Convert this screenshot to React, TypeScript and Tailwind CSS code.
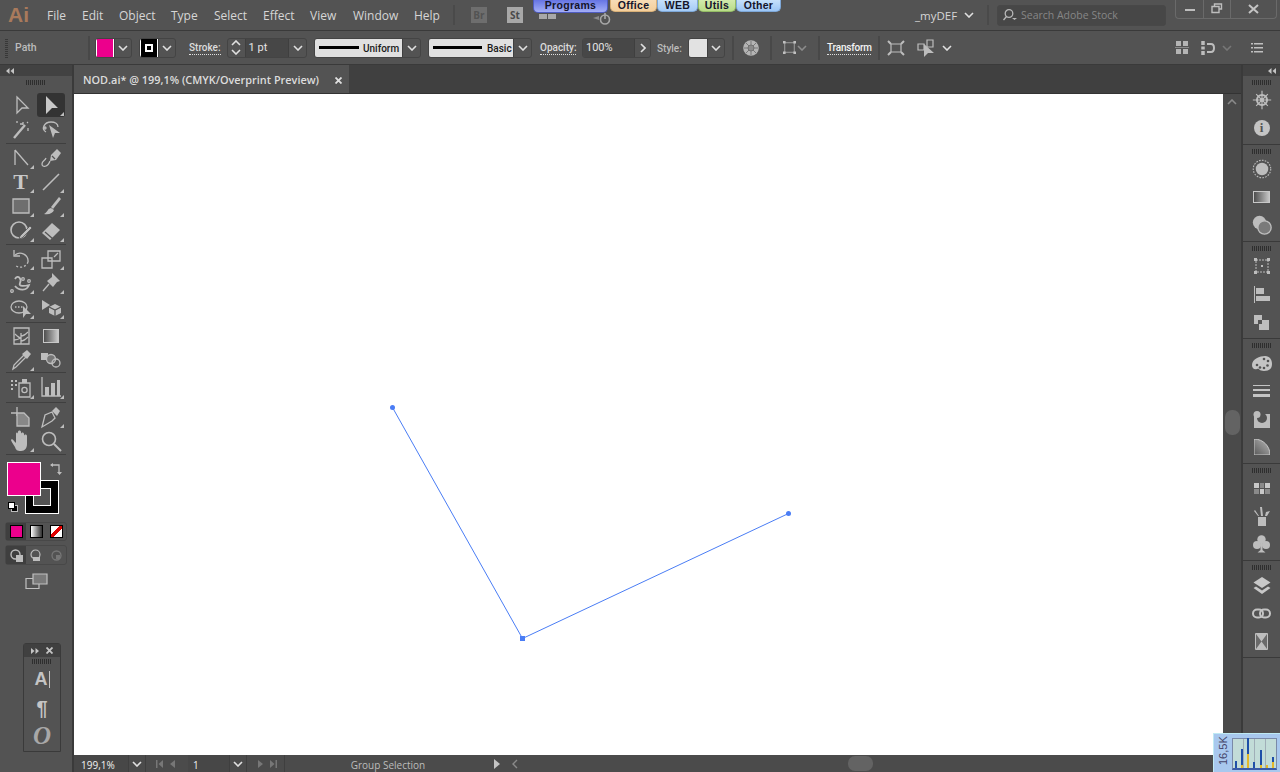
import type { ReactNode } from 'react'

const font = "font-['Open_Sans',sans-serif]"
const g = '#bdbdbd'

function Ic({ children, size = 24 }: { children: ReactNode; size?: number }) {
  return (
    <svg width={size} height={size} viewBox="0 0 24 24" fill="none" stroke={g} strokeWidth="1.3">
      {children}
    </svg>
  )
}

function Chev({ color = '#e0e0e0' }: { color?: string }) {
  return (
    <svg width="10" height="6" viewBox="0 0 10 6" fill="none" stroke={color} strokeWidth="1.6">
      <path d="M1 1l4 4 4-4" />
    </svg>
  )
}

function Grip({ className = '' }: { className?: string }) {
  return (
    <div
      className={`h-[5px] w-[20px] bg-[repeating-linear-gradient(90deg,#2e2e2e_0,#2e2e2e_1px,transparent_1px,transparent_2px)] ${className}`}
    />
  )
}

function Drop({ w = 'w-[18px]' }: { w?: string }) {
  return (
    <div className={`flex h-full ${w} items-center justify-center border-l border-[#3f3f3f]`}>
      <Chev />
    </div>
  )
}

function Box({ className = '', children }: { className?: string; children: ReactNode }) {
  return (
    <div className={`flex h-[20px] items-center overflow-hidden rounded-[3px] border border-[#444444] ${className}`}>
      {children}
    </div>
  )
}

function Sep() {
  return <div className="h-[24px] w-[2px] bg-[#484848]" />
}

function Dotted({ className = '', children }: { className?: string; children: ReactNode }) {
  return (
    <span className={`mt-[1px] border-b border-dotted border-[#e0e0e0] text-[10px] leading-[13px] font-medium whitespace-nowrap ${className}`}>
      {children}
    </span>
  )
}

const menus: [string, string][] = [
  ['File', 'w-[35px]'],
  ['Edit', 'w-[37px]'],
  ['Object', 'w-[52px]'],
  ['Type', 'w-[43px]'],
  ['Select', 'w-[49px]'],
  ['Effect', 'w-[47px]'],
  ['View', 'w-[43px]'],
  ['Window', 'w-[61px]'],
  ['Help', 'w-[36px]'],
]

const launcher = [
  { t: 'Programs', c: 'mr-[2px] w-[75px] h-[13px] bg-gradient-to-b from-[#6674e4] to-[#a4aef6] border-[#4f5cc0]' },
  { t: 'Office', c: 'w-[47px] h-[12px] bg-gradient-to-b from-[#f7dcb6] to-[#f4cf9c] border-[#d8b078]' },
  { t: 'WEB', c: 'w-[41px] h-[12px] bg-gradient-to-b from-[#c6e0fa] to-[#a4cbf6] border-[#7ea8d8]' },
  { t: 'Utils', c: 'w-[38px] h-[12px] bg-gradient-to-b from-[#d2eaac] to-[#b8dc88] border-[#94bc66]' },
  { t: 'Other', c: 'w-[45px] h-[12px] bg-gradient-to-b from-[#c6e0fa] to-[#9cc6f6] border-[#7ea8d8]' },
]

function TitleBar() {
  return (
    <div className="relative flex h-[31px] shrink-0 items-center border-b border-[#3a3a3a] bg-[#535353] pl-[8px]">
      <span className="w-[39px] font-['Liberation_Sans',sans-serif] text-[21px] font-bold text-[#a97a5c]">Ai</span>
      {menus.map(([m, w]) => (
        <span key={m} className={`${w} pt-[1px] text-[12px] text-[#d6d6d6]`}>
          {m}
        </span>
      ))}
      <div className="ml-[3px] h-[20px] w-[2px] bg-[#4a4a4a]" />
      <div className="ml-[16px] flex h-[16px] w-[16px] items-center justify-center bg-[#6e6e6e] text-[10px] font-bold text-[#535353]">
        Br
      </div>
      <div className="ml-[20px] flex h-[16px] w-[16px] items-center justify-center bg-[#a8a8a8] text-[10px] font-bold text-[#4a4a4a]">
        St
      </div>
      <div className="mt-[3px] ml-[16px] flex gap-[1px]">
        <div className="h-[5px] w-[8px] bg-[#a8a8a8]" />
        <div className="h-[5px] w-[8px] bg-[#a8a8a8]" />
      </div>
      <div className="mt-[8px] ml-[36px]">
        <svg width="20" height="14" viewBox="0 0 20 14" fill="none" stroke="#a8a8a8" strokeWidth="1.6">
          <circle cx="13" cy="7.5" r="4.5" />
          <path d="M13 1v6" />
          <path d="M1 6l6-2v4z" fill="#8a8a8a" stroke="none" />
        </svg>
      </div>
      <span className="ml-[303px] w-[47px] pt-[1px] text-[11.5px] text-[#d6d6d6]">_myDEF</span>
      <div className="ml-[2px]">
        <Chev />
      </div>
      <div className="ml-[13px] h-[20px] w-[2px] bg-[#4a4a4a]" />
      <div className="ml-[8px] flex h-[21px] w-[169px] items-center rounded-[3px] border border-[#484848] bg-[#474747] pl-[4px]">
        <svg width="16" height="14" viewBox="0 0 16 14" fill="none" stroke="#b8b8b8" strokeWidth="1.3">
          <circle cx="7" cy="5.5" r="3.8" />
          <path d="M4.5 8.5L1.5 12" />
          <path d="M10 10h5l-2.5 2z" fill="#b8b8b8" stroke="none" />
        </svg>
        <span className="ml-[3px] pt-[1px] text-[10.5px] text-[#868686]">Search Adobe Stock</span>
      </div>
      <div className="mb-[12px] ml-[9px] flex h-[19px] w-[102px] rounded-b-[4px] border border-t-0 border-[#6a6a6a]">
        <div className="flex w-[28px] items-center justify-center border-r border-[#6a6a6a]">
          <div className="mt-[3px] h-[2px] w-[10px] bg-[#bdbdbd]" />
        </div>
        <div className="flex w-[27px] items-center justify-center border-r border-[#6a6a6a]">
          <svg width="12" height="11" viewBox="0 0 12 11" fill="none" stroke="#bdbdbd" strokeWidth="1.4">
            <path d="M3.5 3V1h7v5H8M1 3.5h7v6H1z" />
          </svg>
        </div>
        <div className="flex flex-1 items-center justify-center">
          <svg width="11" height="10" viewBox="0 0 11 10" fill="none" stroke="#c4c4c4" strokeWidth="2">
            <path d="M1 1l9 8M10 1l-9 8" />
          </svg>
        </div>
      </div>
      <div className="absolute top-0 left-[533px] flex font-['Liberation_Sans',sans-serif]">
        {launcher.map((b) => (
          <div
            key={b.t}
            className={`flex items-center justify-center rounded-b-[5px] border border-t-0 text-[10.5px] font-bold tracking-[0.3px] text-[#14142a] ${b.c}`}
          >
            {b.t}
          </div>
        ))}
      </div>
    </div>
  )
}

function ControlBar() {
  return (
    <div className="flex h-[34px] shrink-0 items-center border-b border-[#3a3a3a] bg-[#535353] pl-[5px] font-['Roboto',sans-serif] text-[11px]">
      <div className="h-[20px] w-[3px] bg-[repeating-linear-gradient(0deg,#383838_0,#383838_1px,transparent_1px,transparent_2px)]" />
      <span className="ml-[7px] w-[73px] text-[10.5px] font-medium text-[#bcbcbc]">Path</span>
      <Sep />
      <Box className="ml-[5px] w-[37px]">
        <div className="h-[20px] w-[19px] border border-white bg-[#ec008c]" />
        <Drop />
      </Box>
      <Box className="ml-[7px] w-[37px]">
        <div className="flex h-[20px] w-[19px] items-center justify-center border border-white bg-black">
          <div className="h-[8px] w-[8px] border-2 border-white" />
        </div>
        <Drop />
      </Box>
      <Dotted className="ml-[13px] w-[32px] text-[#dcdcdc]">Stroke:</Dotted>
      <Box className="ml-[6px] w-[80px]">
        <div className="flex h-full w-[18px] flex-col items-center justify-center gap-[3px] border-r border-[#3f3f3f]">
          <div className="rotate-180">
            <Chev />
          </div>
          <Chev />
        </div>
        <span className="h-full w-[44px] bg-[#474747] pl-[3px] leading-[18px] text-[#e4e4e4]">1 pt</span>
        <Drop />
      </Box>
      <Box className="ml-[7px] w-[107px]">
        <div className="flex h-full w-[89px] items-center bg-[#e0e0e0] pl-[4px] text-[10px] font-medium text-[#1a1a1a]">
          <div className="h-[3px] w-[40px] bg-black" />
          <span className="mt-[2px] ml-[4px]">Uniform</span>
        </div>
        <Drop />
      </Box>
      <Box className="ml-[7px] w-[104px]">
        <div className="flex h-full w-[86px] items-center bg-[#e0e0e0] pl-[4px] text-[10px] font-medium text-[#1a1a1a]">
          <div className="h-[3px] w-[49px] bg-black" />
          <span className="mt-[2px] ml-[5px]">Basic</span>
        </div>
        <Drop />
      </Box>
      <Dotted className="ml-[8px] w-[36px] text-[#dcdcdc]">Opacity:</Dotted>
      <Box className="ml-[6px] w-[69px]">
        <span className="h-full w-[51px] bg-[#474747] pl-[3px] leading-[18px] text-[#e4e4e4]">100%</span>
        <div className="flex h-full flex-1 items-center justify-center border-l border-[#3f3f3f]">
          <div className="-rotate-90">
            <Chev />
          </div>
        </div>
      </Box>
      <span className="mt-[1px] ml-[6px] w-[25px] text-[10px] font-medium text-[#bcbcbc]">Style:</span>
      <Box className="ml-[6px] w-[37px]">
        <div className="h-[20px] w-[19px] bg-[#e2e2e2]" />
        <Drop />
      </Box>
      <div className="ml-[7px]">
        <Sep />
      </div>
      <div className="ml-[9px]">
        <svg width="16" height="16" viewBox="0 0 16 16" fill="#b4b4b4" stroke="#6a6a6a" strokeWidth="0.8">
          <circle cx="8" cy="8" r="7.8" stroke="none" />
          <path d="M8 1v14M1 8h14M3 3l10 10M13 3L3 13" />
          <circle cx="8" cy="8" r="3" fill="#8a8a8a" />
        </svg>
      </div>
      <div className="ml-[11px]">
        <Sep />
      </div>
      <div className="ml-[11px] flex w-[24px] items-center">
        <svg width="15" height="15" viewBox="0 0 15 15" fill="#c0c0c0" stroke="none">
          <path d="M2 2h11v11H2z" fill="none" stroke="#a8a8a8" />
          <path d="M0 0h3v3H0zM12 0h3v3h-3zM0 12h3v3H0zM12 12h3v3h-3z" />
        </svg>
        <div className="ml-[1px]">
          <Chev color="#8c8c8c" />
        </div>
      </div>
      <div className="ml-[11px]">
        <Sep />
      </div>
      <Dotted className="ml-[7px] w-[44px] tracking-[-0.2px] text-[#f4f4f4]">Transform</Dotted>
      <div className="ml-[7px]">
        <Sep />
      </div>
      <div className="ml-[7px] w-[20px]">
        <svg width="18" height="16" viewBox="0 0 18 16" fill="none" stroke="#bdbdbd" strokeWidth="1.2">
          <path d="M4 4h10v8H4z" />
          <path d="M1 1l3 3M17 1l-3 3M1 15l3-3M17 15l-3-3" strokeWidth="2" />
        </svg>
      </div>
      <div className="ml-[10px] w-[20px]">
        <svg width="18" height="18" viewBox="0 0 18 18" fill="none" stroke="#bdbdbd" strokeWidth="1.2">
          <path d="M10 1h6v7h-6zM1 5h6v6H1z" />
          <path d="M7 5v13l4-4h6z" fill="#bdbdbd" stroke="none" />
        </svg>
      </div>
      <div className="ml-[5px]">
        <Chev />
      </div>
      <div className="flex-1" />
      <svg width="14" height="13" viewBox="0 0 14 13" fill="#b4b4b4">
        <path d="M1 0h5v5H1zM8 0h5v5H8zM1 8h5v5H1zM8 8h5v5H8z" />
        <path d="M0 6h14v1H0z" fill="#8a8a8a" />
      </svg>
      <div className="ml-[12px]">
        <svg width="16" height="14" viewBox="0 0 16 14" fill="none" stroke="#bdbdbd" strokeWidth="2">
          <path d="M2 0v4M2 5.500v3M2 10v4" strokeWidth="3.5" />
          <path d="M6 3h4c4 0 4 8 0 8H6" />
        </svg>
      </div>
      <div className="ml-[5px]">
        <Chev color="#777777" />
      </div>
      <div className="ml-[19px]">
        <svg width="12" height="11" viewBox="0 0 12 11" fill="#c0c0c0">
          <path d="M0 1h2v1.500H0zM3 1h9v1.500H3zM0 5h2v1.500H0zM3 5h9v1.500H3zM0 9h2v1.500H0zM3 9h9v1.500H3z" />
        </svg>
      </div>
      <div className="w-[17px]" />
    </div>
  )
}

function Tool({ icon, more = true, active = false }: { icon: ReactNode; more?: boolean; active?: boolean }) {
  return (
    <div className={`relative flex h-[24.3px] w-[28px] items-center justify-center rounded-[3px] ${active ? 'bg-[#333333]' : ''}`}>
      {icon}
      {more && (
        <div className="absolute right-[1px] bottom-[1px] h-0 w-0 border-b-[4px] border-l-[4px] border-b-[#bdbdbd] border-l-transparent" />
      )}
    </div>
  )
}

function ToolRow({ a, b }: { a: ReactNode; b: ReactNode }) {
  return (
    <div className="flex justify-center gap-[2px] pr-[1px]">
      {a}
      {b}
    </div>
  )
}

function ToolSep() {
  return <div className="mx-[6px] h-px bg-[#3f3f3f]" />
}

function ToolsPanel() {
  return (
    <div className="flex w-[74px] shrink-0 flex-col border-r-2 border-[#3a3a3a] bg-[#535353]">
      <div className="flex h-[11px] items-center bg-[#424242] pl-[6px]">
        <svg width="8" height="6" viewBox="0 0 8 6" fill="#c4c4c4">
          <path d="M3.5 0v6L0 3zM8 0v6L4.5 3z" />
        </svg>
      </div>
      <div className="flex h-[17px] justify-center pt-[4px]">
        <Grip />
      </div>
      <ToolRow
        a={<Tool more={false} icon={<Ic><path d="M8 4l11 11h-6l-5 5z" /></Ic>} />}
        b={<Tool active icon={<Ic><path d="M7 3l12 12h-6l-6 6z" fill="#c8c8c8" stroke="none" /></Ic>} />}
      />
      <ToolRow
        a={<Tool more={false} icon={<Ic><path d="M5 21L16 8" strokeWidth="2.4" /><path d="M14 5v3M11 7h3M19 11v3M8 4v2M19 5l-1 1" /></Ic>} />}
        b={<Tool more={false} icon={<Ic><path d="M7 15C2 12 5 5 12 5c4 0 7 2 7 5" /><path d="M10 8l11 8h-5l-2 5z" fill={g} stroke="none" /><circle cx="6" cy="11" r="1" /></Ic>} />}
      />
      <div className="h-[1px]" />
      <ToolSep />
      <div className="h-[2px]" />
      <ToolRow
        a={<Tool icon={<Ic><path d="M6 4v15M6 4l13 15" /></Ic>} />}
        b={<Tool more={false} icon={<Ic><path d="M12 9l6-6 4 4-5 7-6 1z" fill={g} stroke="none" /><path d="M13 10l3 3" stroke="#535353" /><path d="M11 15c-2 6-8 7-8 3 0-3 3-3 4-6" /></Ic>} />}
      />
      <ToolRow
        a={<Tool icon={<span className="font-['Liberation_Serif',serif] text-[22px] leading-none font-bold text-[#c8c8c8]">T</span>} />}
        b={<Tool icon={<Ic><path d="M4 20L20 4" strokeWidth="1.6" /></Ic>} />}
      />
      <ToolRow
        a={<Tool icon={<Ic><path d="M4 5h16v14H4z" fill="#6e6e6e" /></Ic>} />}
        b={<Tool icon={<Ic><path d="M12 13l8-10 2 2-8 10z" fill={g} stroke="none" /><path d="M12 14c-4 1-3 4-7 6 5 1 9-1 10-4z" fill={g} stroke="none" /></Ic>} />}
      />
      <ToolRow
        a={<Tool icon={<Ic><circle cx="10" cy="11" r="8" strokeWidth="1.6" /><path d="M11 17L21 7l2 2-10 10-3 1z" fill={g} stroke="#535353" strokeWidth="0.8" /></Ic>} />}
        b={<Tool icon={<Ic><path d="M3 14L13 4l8 7-10 10z" fill={g} stroke="none" /><path d="M6 13l8 7" stroke="#535353" /></Ic>} />}
      />
      <div className="h-[1px]" />
      <ToolSep />
      <div className="h-[2px]" />
      <ToolRow
        a={<Tool icon={<Ic><path d="M6 8a8 8 0 0 1 13 7" /><path d="M5 3v6h6" /><path d="M19 15a8 8 0 0 1-13 3" strokeDasharray="2 2" /></Ic>} />}
        b={<Tool icon={<Ic><path d="M9 4h12v10H9z" /><path d="M3 11h10v10H3z" /><path d="M15 10l4-4" /></Ic>} />}
      />
      <ToolRow
        a={<Tool icon={<Ic><path d="M6 8c3-5 7 0 5 4s5 3 9 2c-2 6-10 6-14 1" strokeWidth="1.8" /><circle cx="3" cy="20" r="1.3" /><circle cx="14" cy="8" r="1.3" /><circle cx="20" cy="10" r="1.3" /></Ic>} />}
        b={<Tool icon={<Ic><path d="M13 2l8 8-3 1-4 5-6-6 5-4z" fill={g} stroke="none" /><path d="M10 13l-6 7" /></Ic>} />}
      />
      <ToolRow
        a={<Tool icon={<Ic><ellipse cx="10" cy="11" rx="8" ry="6" /><path d="M6 11h9" strokeDasharray="1.5 1.5" /><path d="M14 10l8 8h-5l-3 4z" fill={g} stroke="none" /></Ic>} />}
        b={<Tool icon={<Ic><path d="M3 4l8 5-8 5z" fill={g} stroke="none" /><path d="M16 8l6 3v6l-6 3-6-3v-6z" fill={g} stroke="none" /><path d="M16 14v6M10 11l6 3 6-3" stroke="#535353" /></Ic>} />}
      />
      <div className="h-[2px]" />
      <ToolSep />
      <div className="h-[1px]" />
      <ToolRow
        a={<Tool more={false} icon={<Ic><path d="M5 4h15v16H5z" /><path d="M12 20V9M12 14c-2 0-4-2-6-4M12 12c3 0 5-2 7-4M12 17c3 0 5-2 7-4M5 16c3 0 5-1 7-2" /></Ic>} />}
        b={<Tool more={false} icon={<svg width="16" height="14"><rect x="0.5" y="0.5" width="15" height="13" fill="url(#tg)" stroke="#c8c8c8" /><defs><linearGradient id="tg"><stop offset="0" stopColor="#4a4a4a" /><stop offset="1" stopColor="#cfcfcf" /></linearGradient></defs></svg>} />}
      />
      <ToolRow
        a={<Tool icon={<Ic><path d="M4 21l1-4L15 7l2 2L7 19z" /><path d="M13 6l5-4 4 4-4 5z" fill={g} stroke="none" /></Ic>} />}
        b={<Tool more={false} icon={<Ic><path d="M2 5h7v7H2z" fill={g} stroke="none" /><circle cx="12" cy="11" r="4.5" fill="#777" /><circle cx="17" cy="15" r="4" /></Ic>} />}
      />
      <ToolSep />
      <div className="h-[2px]" />
      <ToolRow
        a={<Tool icon={<Ic><path d="M10 8h11v14H10z" /><circle cx="15.5" cy="15" r="2.6" /><path d="M13 4h5v4h-5z" fill={g} stroke="none" /><path d="M2 6h2M6 6h2M2 10h2M6 10h2M2 14h2" strokeWidth="2" /></Ic>} />}
        b={<Tool icon={<Ic><path d="M3 2v19h19" /><path d="M6 12h4v9H6zM12 8h4v13h-4zM18 5h3v16h-3z" fill={g} stroke="none" /></Ic>} />}
      />
      <div className="h-[2px]" />
      <ToolSep />
      <div className="h-[2px]" />
      <ToolRow
        a={<Tool more={false} icon={<Ic><path d="M8 2v9M2 8h6" /><path d="M8 8h7l5 5v8H8z" fill="#888" /></Ic>} />}
        b={<Tool icon={<Ic><path d="M3 22l3-12 7-3 3 6-3 3-10 6z" /><path d="M13 6l4-4 4 4-3 5z" fill={g} stroke="none" /></Ic>} />}
      />
      <ToolRow
        a={<Tool icon={<Ic><path d="M6 18c-2-3-4-6-4-7s2-1 3 1l2 2V5c0-2 2-2 2 0V3c0-2 3-2 3 0v2c0-2 3-2 3 0v2c0-2 3-2 3 0v8c0 4-2 7-6 7s-5-1-6-4z" fill={g} stroke="none" /></Ic>} />}
        b={<Tool more={false} icon={<Ic><circle cx="10" cy="10" r="6.5" strokeWidth="1.6" /><path d="M15 15l7 7" strokeWidth="2" /></Ic>} />}
      />
      <div className="h-[1px]" />
      <ToolSep />
      <div className="relative mt-[7px] h-[60px] shrink-0">
        <div className="absolute top-[18px] left-[25px] flex h-[34px] w-[34px] items-center justify-center border border-white bg-black">
          <div className="h-[18px] w-[18px] border border-white bg-[#535353]" />
        </div>
        <div className="absolute top-0 left-[7px] h-[34px] w-[34px] border border-white bg-[#ec008c]" />
        <svg className="absolute top-[0px] left-[49px]" width="14" height="14" viewBox="0 0 14 14" fill="none" stroke="#bdbdbd" strokeWidth="1.3">
          <path d="M2 3h8v7" />
          <path d="M1 3l3-2v4zM8 10h5l-2.5 3z" fill="#bdbdbd" stroke="none" />
        </svg>
        <div className="absolute top-[43px] left-[11px] h-[7px] w-[7px] border border-[#bdbdbd] bg-black" />
        <div className="absolute top-[40px] left-[8px] h-[7px] w-[7px] border border-black bg-white" />
      </div>
      <div className="mx-[5px] flex h-[19px] rounded-[3px] border border-[#484848]">
        <div className="flex w-[20px] items-center justify-center bg-[#3f3f3f]">
          <div className="h-[13px] w-[13px] border border-black bg-[#ec008c]" />
        </div>
        <div className="flex w-[20px] items-center justify-center">
          <div className="h-[13px] w-[13px] border border-black bg-gradient-to-r from-white to-[#333333]" />
        </div>
        <div className="flex w-[20px] items-center justify-center">
          <div className="h-[13px] w-[13px] border border-black bg-[linear-gradient(135deg,white_38%,#e00000_38%,#e00000_62%,white_62%)]" />
        </div>
      </div>
      <div className="mx-[5px] mt-[4px] flex h-[20px] rounded-[3px] border border-[#484848]">
        <div className="flex w-[20px] items-center justify-center bg-[#3f3f3f]">
          <svg width="13" height="13" viewBox="0 0 13 13" fill="none" stroke="#bdbdbd" strokeWidth="1.4">
            <circle cx="5.5" cy="5.5" r="4.5" />
            <path d="M6 6h7v7H6z" fill="#bdbdbd" stroke="none" />
          </svg>
        </div>
        <div className="flex w-[20px] items-center justify-center">
          <svg width="13" height="13" viewBox="0 0 13 13" fill="#bdbdbd" stroke="#bdbdbd" strokeWidth="1.2">
            <circle cx="5.5" cy="5.5" r="4.5" fill="none" />
            <path d="M3 8h7v4H3z" stroke="none" />
          </svg>
        </div>
        <div className="flex w-[20px] items-center justify-center">
          <svg width="11" height="11" viewBox="0 0 11 11" fill="none" stroke="#777777" strokeWidth="1.3">
            <circle cx="5.5" cy="5.5" r="4.5" />
            <path d="M5 5h4v4H5z" fill="#777777" stroke="none" />
          </svg>
        </div>
      </div>
      <div className="mt-[8px] flex justify-center pl-[1px]">
        <svg width="24" height="16" viewBox="0 0 24 16" fill="#7a7a7a" stroke="#c0c0c0" strokeWidth="1.2">
          <path d="M1 5.5h13v10H1z" fill="none" />
          <path d="M8 1h14v10H8z" />
        </svg>
      </div>
    </div>
  )
}

const panelGroups: ReactNode[][] = [
  [
    <Ic size={20} key="nav">
      <circle cx="12" cy="12" r="6" strokeWidth="2.5" />
      <circle cx="12" cy="12" r="1.8" fill={g} />
      <path d="M12 1v22M1 12h22M5 5l14 14M19 5L5 19" strokeWidth="1.4" />
    </Ic>,
    <div key="info" className="flex h-[16px] w-[16px] items-center justify-center rounded-full bg-[#c4c4c4] font-['Liberation_Serif',serif] text-[13px] font-bold text-[#535353]">
      i
    </div>,
  ],
  [
    <Ic size={20} key="stroke">
      <circle cx="12" cy="12" r="7.5" fill={g} stroke="none" />
      <circle cx="12" cy="12" r="10.5" strokeDasharray="2 1.5" />
    </Ic>,
    <svg key="grad" width="17" height="12">
      <rect x="0.5" y="0.5" width="16" height="11" fill="url(#rg)" stroke="#c8c8c8" />
      <defs>
        <linearGradient id="rg">
          <stop offset="0" stopColor="#4a4a4a" />
          <stop offset="1" stopColor="#c8c8c8" />
        </linearGradient>
      </defs>
    </svg>,
    <Ic size={20} key="trans">
      <circle cx="9" cy="9" r="8" fill={g} stroke="none" />
      <circle cx="15" cy="15" r="8" fill="#7a7a7a" strokeWidth="1.6" />
    </Ic>,
  ],
  [
    <svg key="tr" width="16" height="16" viewBox="0 0 16 16" fill={g} stroke="none">
      <path d="M2 2h12v12H2z" fill="none" stroke={g} strokeDasharray="2 1" />
      <path d="M0 0h3v3H0zM13 0h3v3h-3zM0 13h3v3H0zM13 13h3v3h-3zM7 7h2v2H7z" />
    </svg>,
    <svg key="al" width="16" height="17" viewBox="0 0 16 17" fill={g}>
      <path d="M0 0h1v17H0zM2 2h8v6H2zM2 10h14v5H2z" />
    </svg>,
    <svg key="pf" width="15" height="15" viewBox="0 0 15 15" fill={g}>
      <path d="M0 0h8v9H0z" />
      <path d="M5 5h10v10H5z" />
      <path d="M4 5h4v4H4z" fill="#535353" />
    </svg>,
  ],
  [
    <svg key="col" width="20" height="15" viewBox="0 0 20 15">
      <path d="M0 9C0 3 8 0 13 0s7 4 7 8-2 7-8 7S8 12 5 13 0 12 0 9z" fill="#c4c4c4" />
      <circle cx="5" cy="9" r="1.3" fill="#535353" />
      <circle cx="8" cy="11.5" r="1.3" fill="#535353" />
      <circle cx="12" cy="12" r="1.3" fill="#535353" />
      <circle cx="15.5" cy="9.5" r="1.3" fill="#535353" />
      <circle cx="16" cy="5" r="1.3" fill="#535353" />
      <circle cx="12" cy="3" r="1.3" fill="#535353" />
    </svg>,
    <div key="lines" className="flex w-[17px] flex-col gap-[3px]">
      <div className="h-[1px] bg-[#c4c4c4]" />
      <div className="h-[2px] bg-[#c4c4c4]" />
      <div className="h-[3px] bg-[#c4c4c4]" />
    </div>,
    <svg key="path" width="17" height="17" viewBox="0 0 17 17">
      <path d="M1 3h16v14H1z" fill={g} />
      <circle cx="9" cy="7" r="5" fill="#535353" />
      <circle cx="4" cy="3.5" r="3.5" fill={g} />
    </svg>,
    <svg key="fan" width="16" height="16" viewBox="0 0 16 16">
      <path d="M0 0c9 0 16 7 16 16H0z" fill="url(#fg)" stroke="#c8c8c8" />
      <defs>
        <linearGradient id="fg" x1="0" y1="1" x2="1" y2="0">
          <stop offset="0" stopColor="#5a5a5a" />
          <stop offset="1" stopColor="#b8b8b8" />
        </linearGradient>
      </defs>
    </svg>,
  ],
  [
    <svg key="sw" width="16" height="11" viewBox="0 0 16 11" fill="#c8c8c8">
      <path d="M0 0h16v11H0z" />
      <path d="M5 0h1v11H5zM10 0h1v11h-1zM0 5h16v1H0z" fill="#535353" />
      <path d="M6 0h4v5H6zM0 6h5v5H0zM11 6h5v5h-5z" fill="#8a8a8a" />
    </svg>,
    <svg key="br" width="16" height="20" viewBox="0 0 16 20" fill={g}>
      <path d="M4 11h8v9H4z" />
      <path d="M7 10L6 1h2l1 9zM4 10L0 5l1-1 4 6zM11 10l1-4 4-1-3 5z" />
    </svg>,
    <svg key="sy" width="17" height="18" viewBox="0 0 17 18" fill={g}>
      <circle cx="8.5" cy="4.5" r="4.2" />
      <circle cx="4" cy="10" r="4" />
      <circle cx="13" cy="10" r="4" />
      <path d="M7.5 8h2v7l3 2.5h-8l3-2.5z" />
    </svg>,
  ],
  [
    <svg key="la" width="18" height="17" viewBox="0 0 18 17" fill="#c8c8c8">
      <path d="M9 0l8.5 5.5L9 11 .5 5.5z" />
      <path d="M3 9.5l6 4 6-4 2.5 1.5L9 17 .5 11z" />
    </svg>,
    <svg key="li" width="19" height="11" viewBox="0 0 19 11" fill="none" stroke="#c4c4c4" strokeWidth="2">
      <rect x="1" y="1.5" width="10" height="8" rx="4" />
      <rect x="8" y="1.5" width="10" height="8" rx="4" />
    </svg>,
    <svg key="ar" width="13" height="17" viewBox="0 0 13 17" fill={g}>
      <path d="M.5.5h12v16H.5z" fill="#6a6a6a" stroke={g} />
      <path d="M1 1h11L6.5 8.5zM1 16h11L6.5 8.5z" fill={g} />
    </svg>,
  ],
]

function RightPanel() {
  return (
    <div className="flex w-[39px] shrink-0 flex-col border-l-2 border-[#3a3a3a] bg-[#535353]">
      <div className="flex h-[11px] shrink-0 items-center justify-end bg-[#424242] pr-[4px]">
        <svg width="8" height="6" viewBox="0 0 8 6" fill="#c4c4c4">
          <path d="M3.5 0v6L0 3zM8 0v6L4.5 3z" />
        </svg>
      </div>
      {panelGroups.map((icons, i) => (
        <div key={i} className="flex shrink-0 flex-col items-center border-b border-[#3a3a3a] pt-[4px] pb-[2px]">
          <Grip />
          <div className="mt-[1px] flex flex-col items-center">
            {icons.map((ic, j) => (
              <div key={j} className="flex h-[28px] items-center justify-center">
                {ic}
              </div>
            ))}
          </div>
        </div>
      ))}
    </div>
  )
}

function Canvas() {
  return (
    <div className="relative flex min-h-0 flex-1">
      <div className="relative flex-1 bg-white">
        <svg className="absolute inset-0" width="1149" height="661" viewBox="0 0 1149 661" fill="none">
          <path d="M318.5 313.5L448.5 544.5L714.5 419.5" stroke="#4a7df5" strokeWidth="1" />
          <circle cx="318.5" cy="313.5" r="2.5" fill="#4a7df5" />
          <circle cx="714.5" cy="419.5" r="2.5" fill="#4a7df5" />
          <rect x="446" y="542" width="5" height="5" fill="#4a7df5" />
        </svg>
      </div>
      <div className="flex w-[18px] shrink-0 flex-col items-center bg-[#4a4a4a] pt-[5px]">
        <div className="rotate-180">
          <Chev color="#8a8a8a" />
        </div>
        <div className="mt-[305px] h-[25px] w-[15px] rounded-[7px] bg-[#636363]" />
      </div>
    </div>
  )
}

function StatusBar() {
  return (
    <div className="flex h-[17px] shrink-0 items-center bg-[#4b4b4b] text-[10px] text-[#e0e0e0]">
      <div className="flex h-full w-[54px] items-center bg-[#474747] pt-[3px] pl-[7px] text-[#f0f0f0]">199,1%</div>
      <div className="flex h-full w-[18px] items-center justify-center border-x border-[#3f3f3f]">
        <Chev />
      </div>
      <div className="flex h-full w-[42px] items-center justify-center gap-[6px] text-[#777777]">
        <svg width="22" height="8" viewBox="0 0 22 8" fill="#777777">
          <path d="M0 0h1.5v8H0zM7 0v8L2.5 4zM19 0v8l-5-4z" />
        </svg>
      </div>
      <div className="flex h-full w-[41px] items-center bg-[#474747] pt-[3px] pl-[5px] text-[#f0f0f0]">1</div>
      <div className="flex h-full w-[18px] items-center justify-center border-x border-[#3f3f3f]">
        <Chev />
      </div>
      <div className="flex h-full w-[38px] items-center justify-center border-r border-[#3f3f3f]">
        <svg width="22" height="8" viewBox="0 0 22 8" fill="#777777">
          <path d="M3 0v8l5-4zM15 0v8l4.5-4zM20.5 0H22v8h-1.5z" />
        </svg>
      </div>
      <span className="w-[206px] pt-[3px] text-center text-[#bcbcbc]">Group Selection</span>
      <svg className="ml-[2px]" width="8" height="10" viewBox="0 0 8 10" fill="#c4c4c4">
        <path d="M1 0v10l6-5z" />
      </svg>
      <svg className="ml-[11px]" width="6" height="10" viewBox="0 0 6 10" fill="none" stroke="#8a8a8a" strokeWidth="1.4">
        <path d="M5 1L1 5l4 4" />
      </svg>
      <div className="ml-[330px] h-[15px] w-[25px] rounded-[7px] bg-[#636363]" />
    </div>
  )
}

const meter = [
  { blue: 'h-[7px]', yellow: 'h-0' },
  { blue: 'h-[16px]', yellow: 'h-[3px]' },
  { blue: 'h-[16px]', yellow: 'h-[14px]' },
  { blue: 'h-[6px]', yellow: 'h-0' },
  { blue: 'h-[15px]', yellow: 'h-[3px]' },
  { blue: 'h-0', yellow: 'h-[3px]' },
  { blue: 'h-[5px]', yellow: 'h-[6px]' },
]

function Meter() {
  return (
    <div className="absolute right-0 bottom-0 flex h-[39px] w-[67px] border-t border-l border-[#bfeaf4] bg-[#a8c8ee] pt-[4px] pl-[18px]">
      <span className="absolute top-[11px] left-[-3px] w-[24px] -rotate-90 font-['Liberation_Sans',sans-serif] text-[11px] leading-[16px] whitespace-nowrap text-[#45456a]">
        16,5K
      </span>
      <div className="flex h-[32px] w-[45px] items-end justify-between border-x border-t border-b-2 border-[#7a8aa8] border-b-[#3a5aa8] bg-[#c2dcd8] bg-[repeating-linear-gradient(90deg,transparent_0,transparent_10px,#a0aeb8_10px,#a0aeb8_11px)] px-[2px]">
        {meter.map((b, i) => (
          <div key={i} className="flex w-[2px] flex-col">
            <div className={`${b.blue} bg-[#1f4fa8]`} />
            <div className={`${b.yellow} bg-[#e4b82a]`} />
          </div>
        ))}
      </div>
    </div>
  )
}

function FloatingPanel() {
  return (
    <div className="absolute top-[643px] left-[23px] flex h-[109px] w-[38px] flex-col items-center rounded-t-[3px] border border-[#3a3a3a] bg-[#535353]">
      <div className="flex h-[13px] w-full shrink-0 items-center justify-between bg-[#404040] px-[7px]">
        <svg width="8" height="6" viewBox="0 0 8 6" fill="#c4c4c4">
          <path d="M0 0v6l3.5-3zM4.5 0v6L8 3z" />
        </svg>
        <svg width="7" height="7" viewBox="0 0 7 7" fill="none" stroke="#c4c4c4" strokeWidth="1.8">
          <path d="M.5.5l6 6M6.5.5l-6 6" />
        </svg>
      </div>
      <Grip className="mt-[2px] shrink-0" />
      <div className="mt-[2px] flex h-[27px] items-center font-['Liberation_Sans',sans-serif] text-[18px] font-bold text-[#c4c4c4]">
        A<span className="ml-[1px] h-[17px] w-px bg-[#c4c4c4]" />
      </div>
      <div className="flex h-[29px] items-center font-['Liberation_Sans',sans-serif] text-[20px] font-bold text-[#c4c4c4]">¶</div>
      <div className="flex h-[27px] items-center font-['Liberation_Serif',serif] text-[25px] font-bold text-[#a8a8a8] italic">O</div>
    </div>
  )
}

export default function App() {
  return (
    <div className={`relative flex h-[772px] w-[1280px] flex-col overflow-hidden bg-[#535353] ${font}`}>
      <TitleBar />
      <ControlBar />
      <div className="flex min-h-0 flex-1">
        <ToolsPanel />
        <div className="flex min-w-0 flex-1 flex-col">
          <div className="flex h-[29px] shrink-0 border-b border-[#333333] bg-[#404040]">
            <div className="flex h-[28px] w-[275px] items-center justify-between bg-[#535353] pt-[2px] pr-[7px] pl-[9px] text-[10.9px] font-semibold text-[#dcdcdc]">
              <span>NOD.ai* @ 199,1% (CMYK/Overprint Preview)</span>
              <svg width="7" height="7" viewBox="0 0 7 7" fill="none" stroke="#e0e0e0" strokeWidth="1.8">
                <path d="M.5.5l6 6M6.5.5l-6 6" />
              </svg>
            </div>
          </div>
          <Canvas />
          <StatusBar />
        </div>
        <RightPanel />
      </div>
      <FloatingPanel />
      <Meter />
    </div>
  )
}
